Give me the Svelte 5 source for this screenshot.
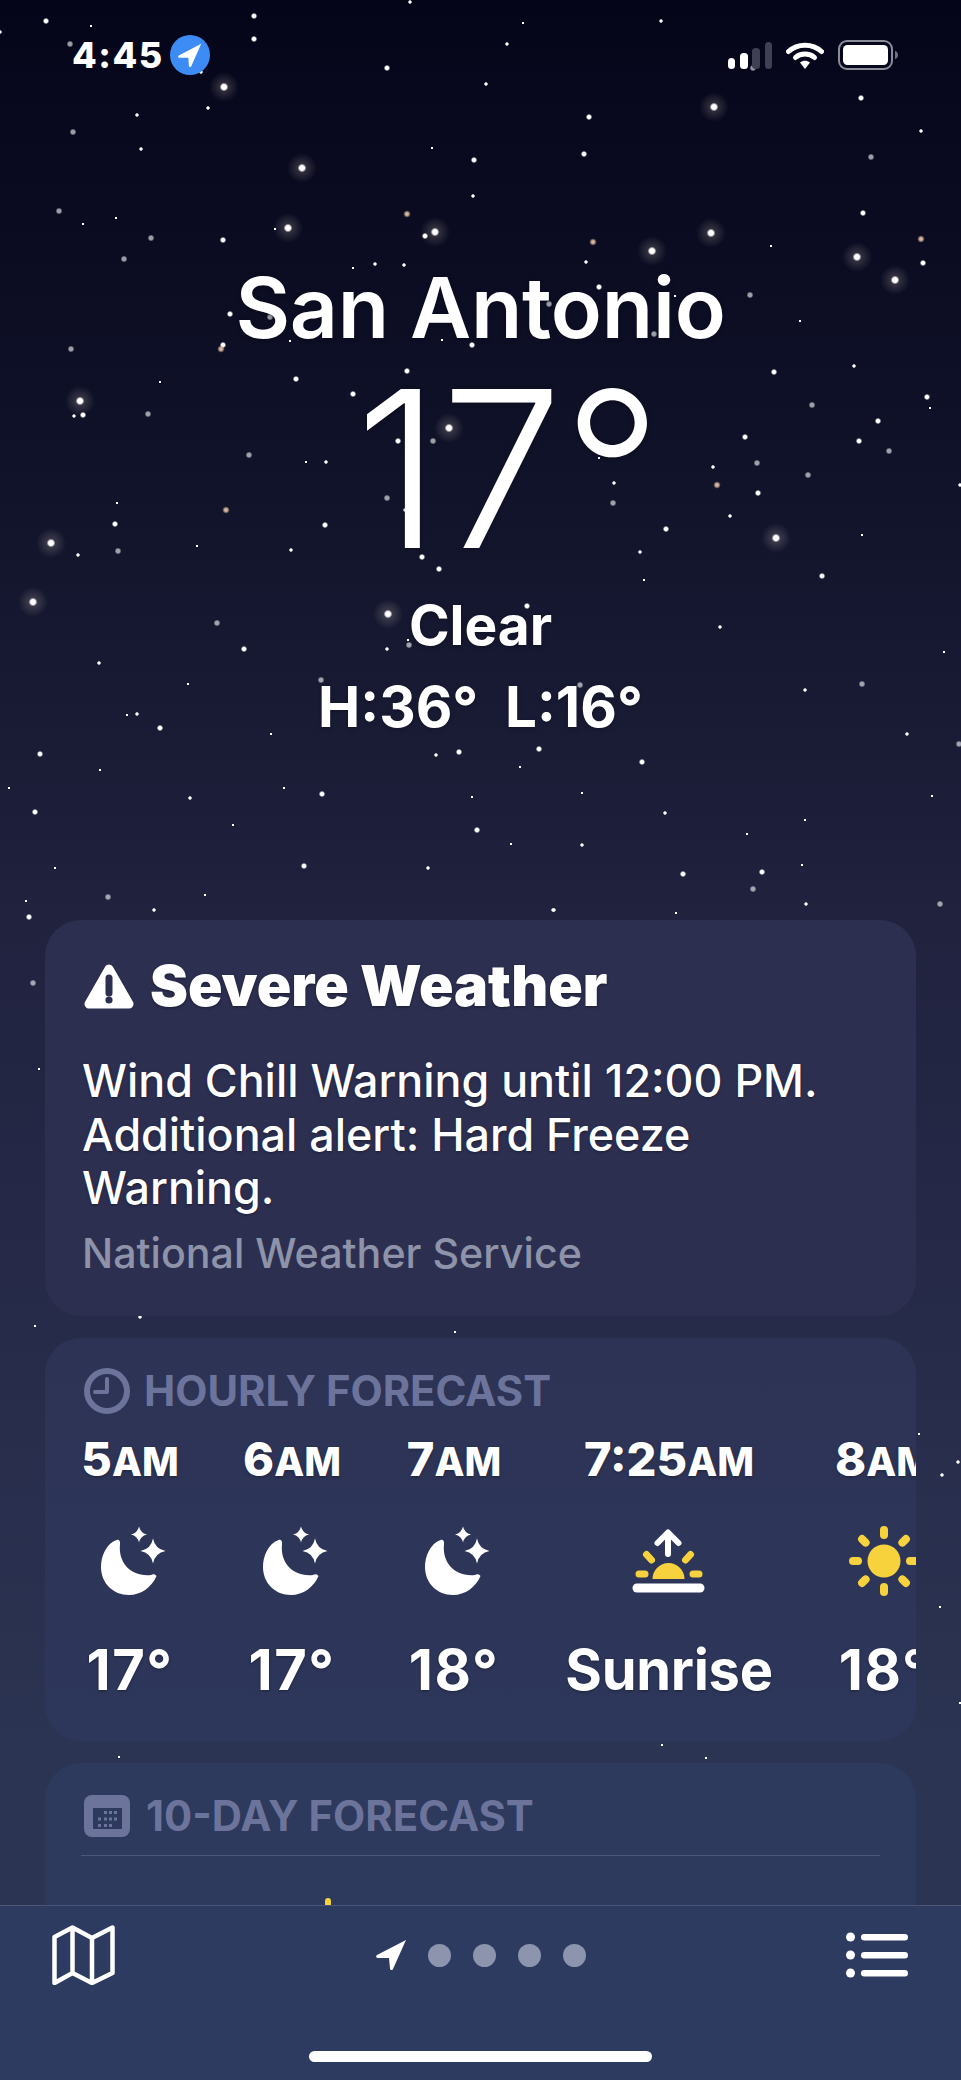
<script>
  // x, y, kind: 0 tiny, 1 small, 2 normal, 3 bright, 4 dim, 5 warm
  const stars = [
    [46,21,2],[91,26,0],[0,32,1],[254,16,2],[254,39,2],[70,44,4],[224,87,3],[208,108,1],[137,115,1],[201,72,1],[410,2,1],[523,23,0],[661,21,1],[507,44,1],[387,68,2],[486,84,1],[589,117,2],[714,107,3],[861,98,2],[753,68,4],
    [73,132,4],[141,149,1],[302,168,3],[432,148,0],[474,160,2],[473,196,1],[59,211,4],[83,224,0],[116,218,0],[151,238,4],[223,240,2],[275,229,0],[288,228,3],[407,214,5],[425,236,2],[435,232,3],[124,259,4],[353,268,0],[375,264,1],[404,265,1],[230,314,2],[270,317,4],[71,349,4],[223,345,2],[221,349,5],[290,341,0],[442,340,0],[472,345,2],[407,371,2],[296,379,2],[160,382,0],[353,394,2],[80,401,3],[74,416,1],[83,415,2],[148,414,4],[449,428,3],[398,441,2],[433,441,4],[249,455,4],[306,462,0],[326,462,1],[117,503,0],[226,510,5],[387,498,4],[405,510,1],
    [584,154,2],[921,131,1],[871,157,4],[863,213,2],[711,233,3],[771,246,0],[593,242,5],[652,251,3],[857,257,3],[921,239,5],[923,263,2],[586,262,1],[895,280,3],[599,287,2],[750,295,4],[675,296,0],[549,304,4],[800,321,0],[654,334,4],[774,372,2],[854,366,1],[812,405,4],[927,397,2],[930,408,0],[878,421,2],[859,441,2],[889,451,4],[745,437,2],[757,463,4],[713,467,1],[808,475,4],[960,485,1],[717,485,5],[758,493,2],[614,483,1],[613,503,4],[599,458,0],[730,516,1],
    [115,524,2],[51,543,3],[78,555,1],[118,551,4],[197,546,0],[291,550,1],[325,525,2],[422,557,2],[439,569,2],[33,602,3],[217,623,4],[244,649,2],[388,614,3],[387,649,1],[409,645,4],[408,640,0],[99,663,1],[188,684,0],[321,680,4],[137,714,1],[127,715,0],[160,728,2],[40,754,2],[271,734,0],[100,770,0],[9,788,0],[190,798,1],[284,788,0],[322,794,2],[35,812,2],[233,825,0],[436,755,1],[459,752,2],[472,797,0],[477,830,2],[304,866,2],[428,868,1],[55,868,0],[108,897,4],[26,901,0],[205,895,0],[154,910,1],[29,917,2],
    [666,529,2],[776,538,3],[862,535,0],[640,552,1],[644,580,0],[822,576,2],[527,606,2],[720,627,1],[944,652,0],[805,690,1],[862,684,4],[580,685,4],[907,734,1],[959,744,4],[539,749,2],[642,762,2],[520,767,0],[582,793,0],[932,796,0],[665,813,1],[805,820,0],[747,834,0],[511,844,0],[582,845,1],[802,865,0],[683,874,2],[762,872,2],[753,889,4],[940,904,4],[806,904,1],[553,910,1],[676,913,0],
    [33,983,4],[39,1069,0],[140,1317,1],[35,1326,0],[554,910,1],[919,1434,0],[958,1462,1],[942,1475,1],[940,1607,0],[960,1703,0],[455,1332,0],[119,1757,0],[662,1745,0],[706,1758,0]
  ];
  const radius = [1.5, 2.2, 3.2, 4.4, 3.4, 3.8];

  const hours = [
    { num: '5', suffix: 'AM', icon: 'moon', temp: '17°' },
    { num: '6', suffix: 'AM', icon: 'moon', temp: '17°' },
    { num: '7', suffix: 'AM', icon: 'moon', temp: '18°' },
    { num: '7:25', suffix: 'AM', icon: 'sunrise', temp: 'Sunrise', wide: true },
    { num: '8', suffix: 'AM', icon: 'sun', temp: '18°' }
  ];
  const rays = [0, 45, 90, 135, 180, 225, 270, 315];
  const calDots = [
    [11,3],[16,3],[21,3],
    [5,9.5],[11,9.5],[16,9.5],[21,9.5],
    [5,16],[11,16],[16,16]
  ];
</script>

<div class="phone">
  <svg class="sky" width="961" height="2080" viewBox="0 0 961 2080" aria-hidden="true">
    <defs>
      <radialGradient id="core">
        <stop offset="0.55" stop-color="#fff" />
        <stop offset="1" stop-color="#fff" stop-opacity="0" />
      </radialGradient>
      <radialGradient id="warm">
        <stop offset="0.35" stop-color="#d8b79c" />
        <stop offset="1" stop-color="#d8b79c" stop-opacity="0" />
      </radialGradient>
      <radialGradient id="glow">
        <stop offset="0" stop-color="#fff2dc" stop-opacity="0.22" />
        <stop offset="1" stop-color="#fff2dc" stop-opacity="0" />
      </radialGradient>
    </defs>
    {#each stars as [x, y, kind]}
      {#if kind === 3}
        <circle cx={x} cy={y} r="15" fill="url(#glow)" />
      {/if}
      <circle cx={x} cy={y} r={radius[kind]} fill={kind === 5 ? 'url(#warm)' : 'url(#core)'} opacity={kind === 4 ? 0.6 : 1} />
    {/each}
  </svg>

  <header class="status">
    <div class="status-left">
      <span class="time">4:45</span>
      <span class="loc-badge">
        <svg width="24" height="24" viewBox="0 0 30 30"><path d="M29 1 1 15.500c-1.600.9-1 3 .8 3L13 18.500l.6 10c.1 1.800 2.300 2.200 3 .6z" fill="#fff" /></svg>
      </span>
    </div>
    <div class="status-right">
      <svg class="signal" width="44" height="27" viewBox="0 0 44 27">
        <rect x="0" y="16" width="7" height="11" rx="3.500" fill="#fff" />
        <rect x="12" y="11" width="8" height="16" rx="3.500" fill="#fff" />
        <rect x="24" y="6" width="8" height="21" rx="3.500" fill="#3f4053" />
        <rect x="37" y="0" width="7" height="27" rx="3.500" fill="#3f4053" />
      </svg>
      <svg class="wifi" width="38" height="28" viewBox="0 0 38 28">
        <path d="M2.500 10.500C11.500 2 26.500 2 35.500 10.500" fill="none" stroke="#fff" stroke-width="5" stroke-linecap="round" />
        <path d="M9.500 16.500C14.500 11.800 23.500 11.800 28.500 16.500" fill="none" stroke="#fff" stroke-width="5" stroke-linecap="round" />
        <path d="M14 21.500c3-2.400 7-2.400 10 0L19 28z" fill="#fff" />
      </svg>
      <svg class="battery" width="60" height="30" viewBox="0 0 60 30">
        <rect x="1" y="1" width="53" height="28" rx="8" fill="none" stroke="#8b8c99" stroke-width="2" />
        <rect x="5" y="5" width="45" height="20" rx="4.500" fill="#fff" />
        <path d="M57 11c2 .6 3 2 3 4s-1 3.400-3 4z" fill="#6f7080" />
      </svg>
    </div>
  </header>

  <section class="hero">
    <h1 class="city">San Antonio</h1>
    <div class="now">17°</div>
    <div class="cond">Clear</div>
    <div class="range">H:36°&nbsp; L:16°</div>
  </section>

  <main class="cards">
    <section class="card alert">
      <h2 class="alert-title">
        <svg width="50" height="45" viewBox="0 0 50 45">
          <path d="M25 5 5 40h40z" fill="#fff" stroke="#fff" stroke-width="9" stroke-linejoin="round" />
          <path d="M25 14v15" stroke="#2c2f50" stroke-width="7" stroke-linecap="round" />
          <circle cx="25" cy="36" r="3.600" fill="#2c2f50" />
        </svg>
        Severe Weather
      </h2>
      <p class="alert-body">Wind Chill Warning until 12:00 PM. Additional alert: Hard Freeze Warning.</p>
      <p class="alert-source">National Weather Service</p>
    </section>

    <section class="card hourly">
      <h3 class="card-head">
        <svg width="46" height="46" viewBox="0 0 46 46">
          <circle cx="23" cy="23" r="20" fill="none" stroke="#6c749c" stroke-width="6" />
          <path d="M23 11v13H11" fill="none" stroke="#6c749c" stroke-width="4" stroke-linecap="round" stroke-linejoin="round" />
        </svg>
        HOURLY FORECAST
      </h3>
      <div class="hours">
        {#each hours as h}
          <div class="hour" class:wide={h.wide}>
            <div class="hour-label">{h.num}<span class="ampm">{h.suffix}</span></div>
            <div class="hour-icon">
              {#if h.icon === 'moon'}
                <svg width="58" height="72" viewBox="0 0 58 72" overflow="visible">
                  <path d="M15.500 15C5 19 0 31 0 42c0 16 12 28 28 28 12 0 23-8 27.500-19-1.500-2-3.500-2-5.500-1-20 2-33-12-31-31 .5-3-1-5-3.500-4z" fill="#fff" />
                  <path d="M52 13.500Q54 24 64.500 26 54 28 52 38.500 50 28 39.500 26 50 24 52 13.500z" fill="#fff" />
                  <path d="M38 1.500Q39.500 8 46 9.500 39.500 11 38 17.500 36.500 11 30 9.500 36.500 8 38 1.500z" fill="#fff" />
                </svg>
              {:else if h.icon === 'sunrise'}
                <svg width="90" height="72" viewBox="0 0 90 72">
                  <path d="M44 8v21M33.500 18 44 7.500 54.500 18" fill="none" stroke="#fff" stroke-width="6" stroke-linecap="round" stroke-linejoin="round" />
                  <path d="M28.500 54a16 16 0 0 1 32 0z" fill="#f8d23c" />
                  <path d="M15 49h6M69 49h6M22.500 29.500l5 5.500M66.500 29.500l-5 5.500" stroke="#f8d23c" stroke-width="7" stroke-linecap="round" />
                  <path d="M13 63h63" stroke="#fff" stroke-width="9" stroke-linecap="round" />
                </svg>
              {:else}
                <svg width="90" height="72" viewBox="0 0 90 72">
                  <circle cx="45" cy="36" r="16.500" fill="#f8d23c" />
                  {#each rays as a}
                    <path d="M45 5v5" stroke="#f8d23c" stroke-width="8" stroke-linecap="round" transform="rotate({a} 45 36)" />
                  {/each}
                </svg>
              {/if}
            </div>
            <div class="hour-temp">{h.temp}</div>
          </div>
        {/each}
      </div>
    </section>

    <section class="card daily">
      <h3 class="card-head">
        <svg width="46" height="42" viewBox="0 0 46 42">
          <rect width="46" height="42" rx="8" fill="#6c749c" />
          <g transform="translate(9 13)">
            <rect width="29" height="21" fill="#2d3a5d" />
            {#each calDots as [x, y]}
              <rect x={x} y={y} width="3" height="3" fill="#6c749c" />
            {/each}
          </g>
        </svg>
        10-DAY FORECAST
      </h3>
      <div class="rule"></div>
      <div class="peek"></div>
    </section>
  </main>

  <nav class="tabbar">
    <div class="tabs">
      <svg width="63" height="60" viewBox="0 0 63 60">
        <path d="M2.500 12 20.500 2.500 40 13 60.500 2.500V48L40 58 20.500 48 2.500 58zM20.500 2.500V48M40 13V58" fill="none" stroke="#fff" stroke-width="4.500" stroke-linejoin="round" />
      </svg>
      <div class="pager">
        <svg width="30" height="30" viewBox="0 0 30 30"><path d="M30 0 1 15c-1.500.9-1 2.900.8 2.900L13 18l1 10.500c.2 1.900 2.300 2.200 3 .5z" fill="#fff" /></svg>
        <span class="dot"></span><span class="dot"></span><span class="dot"></span><span class="dot"></span>
      </div>
      <svg width="62" height="46" viewBox="0 0 62 46">
        <g fill="#fff">
          <circle cx="4.500" cy="5" r="4.500" /><circle cx="4.500" cy="23" r="4.500" /><circle cx="4.500" cy="41" r="4.500" />
          <rect x="15" y="2" width="47" height="6.500" rx="3.200" /><rect x="15" y="20" width="47" height="6.500" rx="3.200" /><rect x="15" y="38" width="47" height="6.500" rx="3.200" />
        </g>
      </svg>
    </div>
    <div class="home-bar"></div>
  </nav>
</div>

<style>
  :global(body) {
    margin: 0;
    background: #05051a;
  }

  .phone {
    position: relative;
    width: 961px;
    height: 2080px;
    overflow: hidden;
    font-family: Inter, "Liberation Sans", sans-serif;
    color: #fff;
    background: linear-gradient(180deg, #05051a 0%, #101229 22%, #20223e 44%, #272b4a 64%, #2b3452 84%, #2b3553 100%);
  }

  .sky {
    position: absolute;
    top: 0;
    left: 0;
  }

  .status {
    position: relative;
    height: 110px;
    padding: 0 63px 0 72px;
    display: flex;
    align-items: center;
    justify-content: space-between;
  }

  .status-left {
    display: flex;
    align-items: center;
    gap: 6px;
  }

  .time {
    font-size: 36px;
    font-weight: 800;
    letter-spacing: 1.5px;
    line-height: 40px;
  }

  .loc-badge {
    width: 40px;
    height: 40px;
    border-radius: 50%;
    background: #3d8bf5;
    display: flex;
    align-items: center;
    justify-content: center;
  }

  .status-right {
    display: flex;
    align-items: center;
  }

  .signal {
    margin-right: 14px;
  }

  .wifi {
    margin-right: 14px;
  }

  .hero {
    position: relative;
    padding-top: 148px;
    text-align: center;
    text-shadow: 0 1px 4px rgba(0, 0, 0, 0.35);
  }

  .city {
    margin: 0;
    font-size: 84px;
    font-weight: 600;
    line-height: 100px;
    letter-spacing: -0.2px;
  }

  .now {
    margin-top: 1px;
    padding-left: 56px;
    font-size: 218px;
    font-weight: 300;
    line-height: 220px;
  }

  .cond {
    margin-top: 16px;
    font-size: 55px;
    font-weight: 700;
    line-height: 60px;
  }

  .range {
    margin-top: 22px;
    font-size: 56.500px;
    font-weight: 700;
    line-height: 60px;
  }

  .cards {
    position: relative;
    margin: 183px 45px 0 45px;
    display: flex;
    flex-direction: column;
    gap: 22px;
  }

  .card {
    border-radius: 36px;
    box-sizing: border-box;
    overflow: hidden;
  }

  .alert {
    height: 396px;
    padding: 36px 37px 0;
    background: #2c2f50;
  }

  .alert-title {
    margin: 0;
    display: flex;
    align-items: center;
    gap: 16px;
    font-size: 57px;
    font-weight: 900;
    line-height: 60px;
    text-shadow: 0 1px 3px rgba(0, 0, 0, 0.4);
  }

  .alert-title svg {
    margin-left: 2px;
  }

  .alert-body {
    margin: 39px 0 0;
    font-size: 44.800px;
    font-weight: 500;
    line-height: 53.500px;
    text-shadow: 0 1px 3px rgba(0, 0, 0, 0.35);
  }

  .alert-source {
    margin: 12px 0 0;
    color: #8e93aa;
    font-size: 41.200px;
    font-weight: 500;
    line-height: 50px;
  }

  .hourly {
    height: 403px;
    padding-top: 30px;
    background: linear-gradient(180deg, #2d3355, #2d375b);
  }

  .card-head {
    margin: 0 0 0 39px;
    display: flex;
    align-items: center;
    gap: 14px;
    height: 46px;
    color: #6c749c;
    font-size: 41.800px;
    font-weight: 700;
  }

  .daily .card-head {
    gap: 16px;
  }

  .hours {
    display: flex;
    margin-top: 22px;
    padding-left: 4px;
    text-shadow: 0 1px 3px rgba(0, 0, 0, 0.35);
  }

  .hour {
    flex: 0 0 162px;
    display: flex;
    flex-direction: column;
    align-items: center;
  }

  .hour.wide {
    flex-basis: 268px;
  }

  .hour-label {
    font-size: 47px;
    font-weight: 800;
    line-height: 46px;
    white-space: nowrap;
  }

  .ampm {
    font-size: 39px;
  }

  .hour-icon {
    margin-top: 40px;
    height: 72px;
    display: flex;
    justify-content: center;
  }

  .hour-temp {
    margin-top: 43px;
    font-size: 56px;
    font-weight: 700;
    line-height: 60px;
    letter-spacing: 1.5px;
    white-space: nowrap;
  }

  .wide .hour-temp {
    letter-spacing: -0.3px;
  }

  .daily {
    height: 400px;
    padding-top: 30px;
    background: #2d395d;
  }

  .rule {
    height: 1px;
    margin: 16px 36px 0 36px;
    background: #4b567c;
  }

  .peek {
    width: 6px;
    height: 20px;
    margin: 42px 0 0 280px;
    border-radius: 3px;
    background: #f8d23c;
  }

  .tabbar {
    position: absolute;
    left: 0;
    right: 0;
    bottom: 0;
    height: 175px;
    box-sizing: border-box;
    padding-top: 19px;
    border-top: 1px solid #4b5578;
    background: #2e3b60;
    display: flex;
    flex-direction: column;
    align-items: center;
  }

  .tabs {
    align-self: stretch;
    height: 60px;
    padding: 0 53px 0 52px;
    display: flex;
    align-items: center;
    justify-content: space-between;
  }

  .pager {
    display: flex;
    align-items: center;
    gap: 22px;
  }

  .dot {
    width: 23px;
    height: 23px;
    border-radius: 50%;
    background: #8d94ad;
  }

  .home-bar {
    width: 343px;
    height: 11px;
    margin-top: 66px;
    border-radius: 6px;
    background: #fff;
  }
</style>
